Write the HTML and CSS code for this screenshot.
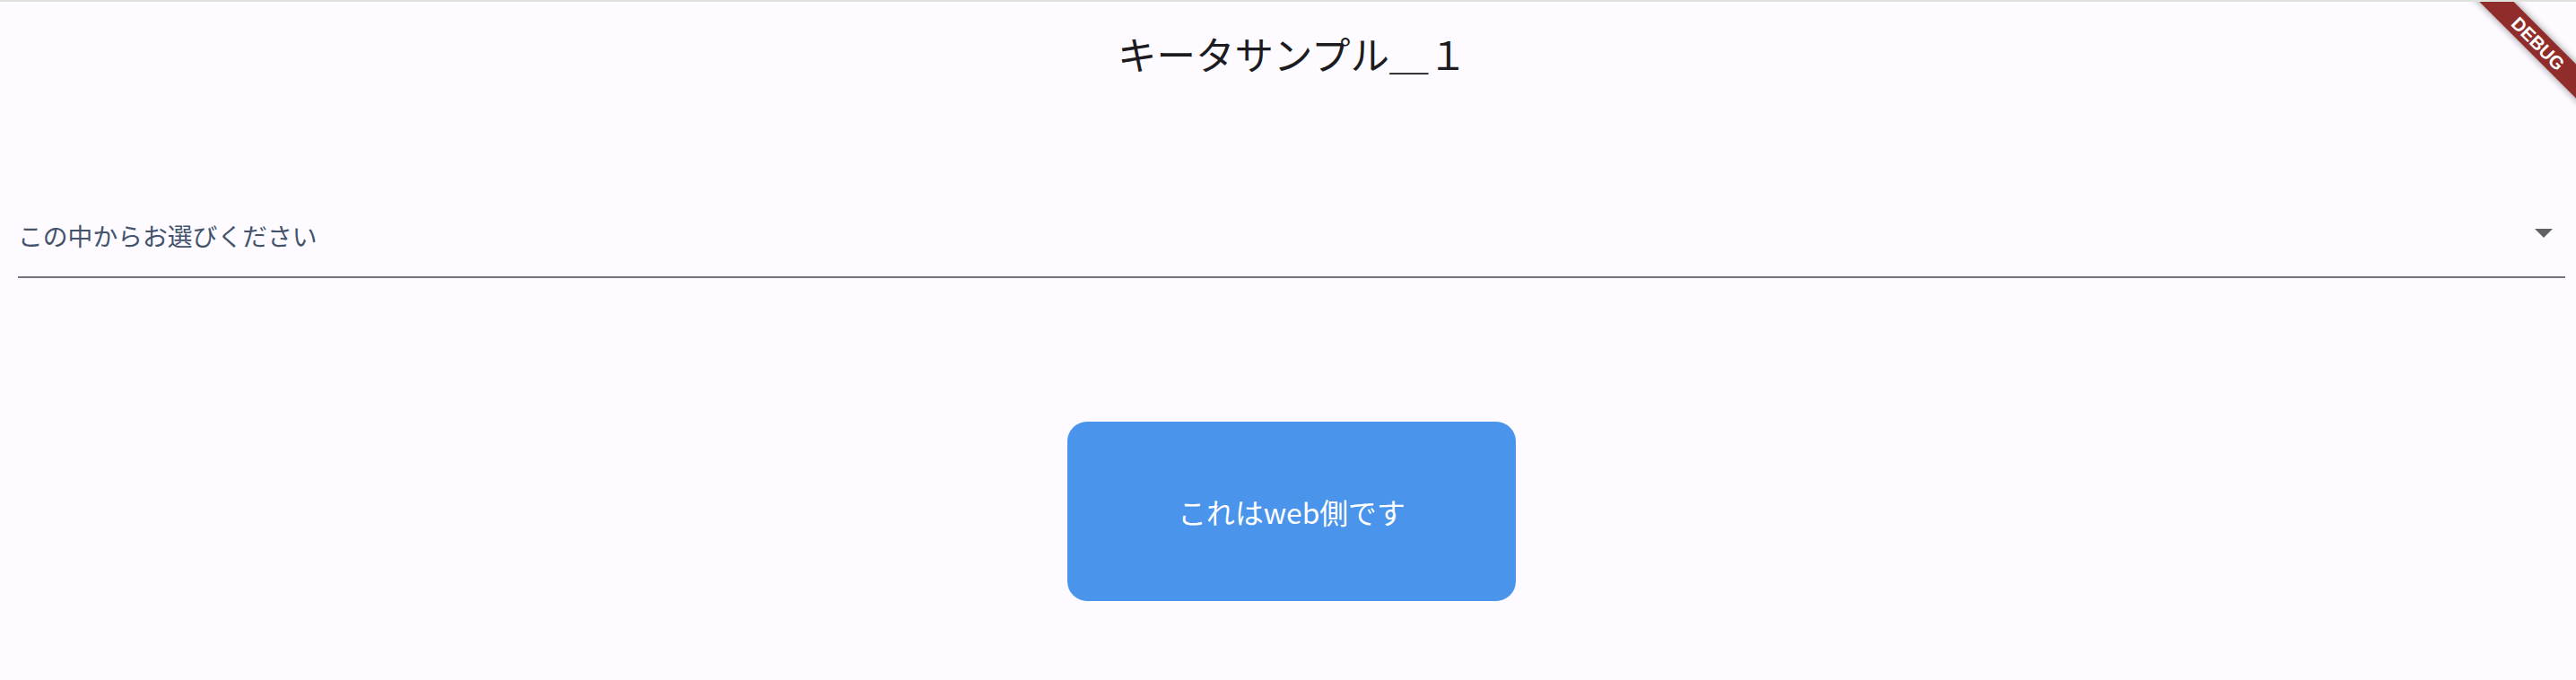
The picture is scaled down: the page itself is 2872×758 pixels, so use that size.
FILE: index.html
```html
<!DOCTYPE html>
<html lang="ja">
<head>
<meta charset="utf-8">
<title>キータサンプル＿１</title>
<link rel="stylesheet" href="styles.css">
</head>
<body>
<div class="app">
  <header class="appbar">
    <h1 class="title">キータサンプル＿１</h1>
  </header>
  <main class="content">
    <div class="dropdown">
      <span class="dropdown-hint">この中からお選びください</span>
      <svg class="dropdown-arrow" width="20" height="10" viewBox="0 0 20 10"><path d="M0 0 L20 0 L10 10 Z" fill="#616161"/></svg>
    </div>
    <div class="button-row">
      <button class="web-button">これはweb側です</button>
    </div>
  </main>
  <div class="debug-clip">
    <div class="debug-banner">DEBUG</div>
  </div>
</div>
</body>
</html>
```
FILE: styles.css
```css
html, body {
  margin: 0;
  padding: 0;
  width: 2872px;
  height: 758px;
  overflow: hidden;
  background: #fdfbff;
}
body {
  font-family: "Noto Sans CJK JP", "Noto Sans", sans-serif;
}
.app {
  position: relative;
  width: 2872px;
  height: 758px;
  border-top: 2px solid #dfe2dd;
  box-sizing: border-box;
  background: #fdfbff;
}
.appbar {
  height: 116px;
  display: flex;
  align-items: center;
  justify-content: center;
  padding-left: 10px;
}
.title {
  margin: 0;
  font-size: 43.5px;
  font-weight: 400;
  color: #1c1b1f;
  line-height: 1.2;
}
.content {
  padding: 0 12px 0 20px;
}
.dropdown {
  margin-top: 76px;
  height: 116px;
  box-sizing: border-box;
  border-bottom: 2px solid #76737c;
  display: flex;
  align-items: center;
  justify-content: space-between;
  padding: 20px 14px 0 0;
}
.dropdown-hint {
  font-size: 27.8px;
  color: #43536b;
  line-height: 1.2;
  padding-top: 3px;
}
.dropdown-arrow {
  display: block;
  margin-top: -2px;
}
.button-row {
  display: flex;
  justify-content: center;
  padding-top: 160px;
}
.web-button {
  width: 500px;
  height: 200px;
  border: none;
  border-radius: 22px;
  background: #4a94eb;
  color: #ffffff;
  font-family: "Noto Sans CJK JP", "Noto Sans", sans-serif;
  font-size: 31.8px;
  padding: 0;
}
.debug-clip {
  position: absolute;
  top: 0;
  right: 0;
  width: 160px;
  height: 160px;
  overflow: hidden;
  pointer-events: none;
}
.debug-banner {
  position: absolute;
  width: 220px;
  height: 27px;
  left: 8px;
  top: 33px;
  transform: rotate(45deg);
  background: #902d2b;
  color: #ffffff;
  font-family: "Liberation Sans", "Noto Sans", sans-serif;
  font-weight: 700;
  font-size: 20.5px;
  line-height: 27px;
  text-align: center;
  box-shadow: 0 0 8px rgba(0, 0, 0, 0.45);
}
```
